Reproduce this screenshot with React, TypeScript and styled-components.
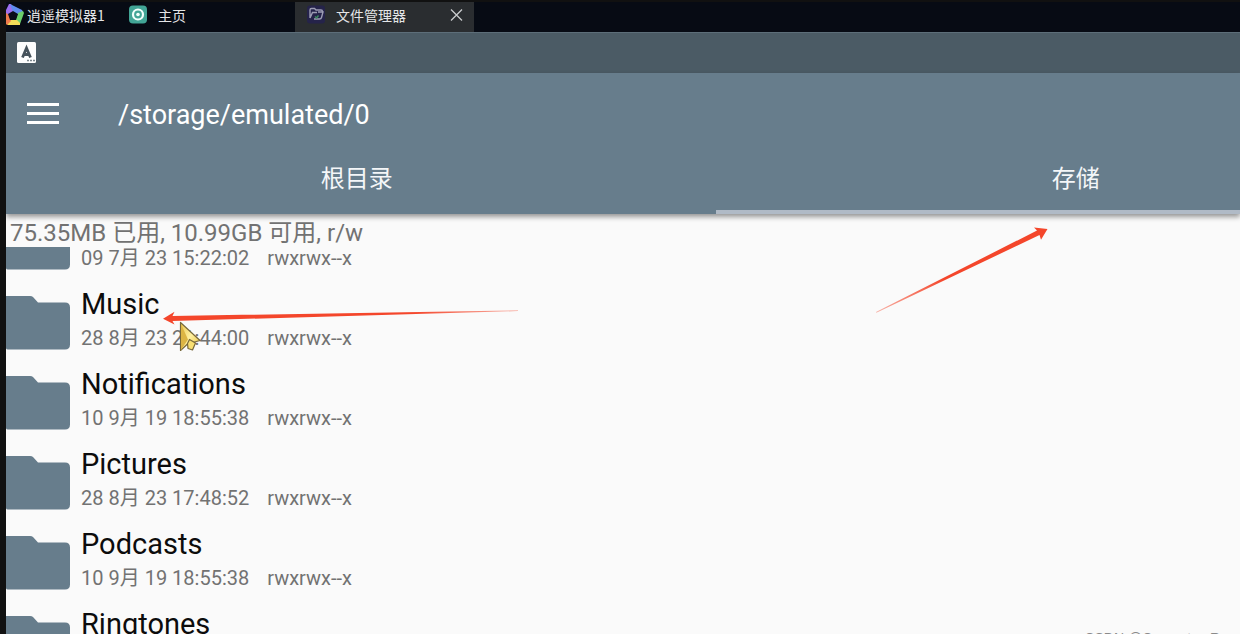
import React from "react";
import styled, { createGlobalStyle } from "styled-components";

const slate = "#677d8c";

const GlobalStyle = createGlobalStyle`
  * { box-sizing: border-box; }
  body { margin: 0; background: #fafafa; font-family: Roboto, "Noto Sans CJK SC", sans-serif; }
  button { font: inherit; color: inherit; background: none; border: 0; padding: 0; margin: 0; text-align: left; cursor: pointer; }
`;

const Screen = styled.div`
  position: relative;
  display: flex;
  flex-direction: column;
  height: 100vh;
  overflow: hidden;
  border-left: 6px solid #111111;
  background: #fafafa;
`;

const TitleBar = styled.header`
  display: flex;
  flex: none;
  height: 32px;
  border-top: 2px solid #111111;
  background: #070b14;
  color: #e4e5e7;
  font-family: "Noto Sans CJK SC", sans-serif;
  font-size: 14px;
  line-height: 26px;
  white-space: nowrap;
`;

const Brand = styled.div`
  display: flex;
  width: 122px;
  gap: 3px;
`;

const WindowTab = styled.div<{ $active?: boolean }>`
  display: flex;
  align-items: flex-start;
  width: ${(p) => (p.$active ? 179 : 167)}px;
  padding: 0 10px 0 ${(p) => (p.$active ? 11 : 0)}px;
  background: ${(p) => (p.$active ? "#2a2d30" : "transparent")};
`;

const TabIcon = styled.svg`
  flex: none;
  width: 20px;
  height: 20px;
  margin: 3px 10px 0 0;
`;

const BrandIcon = styled.svg`
  flex: none;
  width: 18px;
  height: 24px;
  margin-top: 1px;
`;

const TabLabel = styled.button`
  flex: 1;
  line-height: 26px;
`;

const CloseButton = styled.button`
  width: 14px;
  height: 26px;
  svg { display: block; }
`;

const StatusBar = styled.div`
  display: flex;
  align-items: center;
  flex: none;
  height: 41px;
  padding-left: 11px;
  background: #4b5b65;
  border-top: 1px solid #5d6e79;
`;

const AppBar = styled.div`
  position: relative;
  flex: none;
  background: ${slate};
  color: #ffffff;
  box-shadow: 0 3px 5px rgba(0, 0, 0, 0.4);
  z-index: 1;
`;

const Toolbar = styled.div`
  display: flex;
  align-items: flex-start;
  height: 81px;
  padding: 24px 0 0 21px;
  gap: 59px;
`;

const MenuButton = styled.button`
  display: flex;
  flex-direction: column;
  gap: 6px;
  width: 32px;
  padding-top: 6px;
`;

const MenuBar = styled.span`
  height: 3px;
  background: #ffffff;
`;

const Path = styled.h1`
  margin: 0;
  font-size: 27px;
  line-height: 36px;
  font-weight: 400;
`;

const Tabs = styled.div`
  display: flex;
  height: 60px;
  overflow: hidden;
`;

const Tab = styled.button<{ $active?: boolean }>`
  flex: none;
  width: ${(p) => (p.$active ? "58.4%" : "57.5%")};
  padding-right: ${(p) => (p.$active ? 0 : 8)}px;
  padding-bottom: ${(p) => (p.$active ? 6 : 10)}px;
  border-bottom: ${(p) => (p.$active ? 4 : 0)}px solid #b0bac6;
  color: #f4f6f8;
  font-size: 24px;
  line-height: 48px;
  text-align: center;
`;

const Summary = styled.p`
  flex: none;
  height: 33px;
  margin: 0;
  padding: 4px 0 0 4px;
  color: #727272;
  font-size: 24px;
  line-height: 30px;
`;

const FileList = styled.ul`
  flex: 1;
  min-height: 0;
  margin: 0;
  padding: 0;
  overflow: hidden;
  list-style: none;
`;

const Row = styled.li<{ $clipped?: boolean }>`
  height: ${(p) => (p.$clipped ? 35 : 80)}px;
  overflow: hidden;
`;

const RowButton = styled.button`
  display: flex;
  align-items: flex-end;
  gap: 11px;
  width: 100%;
  height: 100%;
`;

const FolderIcon = styled.svg`
  flex: none;
  width: 64px;
  height: 56px;
  margin-bottom: 11px;
`;

const Details = styled.span`
  display: flex;
  flex-direction: column;
`;

const Name = styled.span`
  height: 44px;
  padding-top: 4px;
  color: #0c0c0c;
  font-size: 29px;
  line-height: 36px;
`;

const Meta = styled.span`
  display: flex;
  gap: 18px;
  height: 36px;
  color: #727272;
  font-size: 20px;
  line-height: 24px;
`;

const Overlay = styled.svg`
  position: absolute;
  top: 0;
  left: -6px;
  width: 1240px;
  height: 634px;
  z-index: 2;
  pointer-events: none;
`;

const Watermark = styled.span`
  position: absolute;
  right: 20px;
  bottom: -13px;
  color: #8a8a8a;
  font-family: "Liberation Sans", sans-serif;
  font-size: 14px;
  line-height: 18px;
`;

const files = [
  { name: "", date: "09 7月 23 15:22:02", mode: "rwxrwx--x", clipped: true },
  { name: "Music", date: "28 8月 23 21:44:00", mode: "rwxrwx--x" },
  { name: "Notifications", date: "10 9月 19 18:55:38", mode: "rwxrwx--x" },
  { name: "Pictures", date: "28 8月 23 17:48:52", mode: "rwxrwx--x" },
  { name: "Podcasts", date: "10 9月 19 18:55:38", mode: "rwxrwx--x" },
  { name: "Ringtones", date: "", mode: "" },
];

function BrandLogo() {
  return (
    <BrandIcon viewBox="0 0 18 24" aria-hidden="true">
      <path d="M0 7L3 1H5L9 9L3 13L0 12Z" fill="#9c6ff0" />
      <path d="M4 1L16 7L17 9L13 12L7 9Z" fill="#5f8df0" />
      <path d="M17 8L18 10L14 21L9 18L12 10Z" fill="#6bcf6c" />
      <path d="M14 22H1L4 17H11L14 20Z" fill="#f4dd58" />
      <path d="M0 10L3 12L5 18L1 22L0 21Z" fill="#ef7b4c" />
      <path d="M2 11L7 8L12 11L10 17H4Z" fill="#0a0d1c" />
    </BrandIcon>
  );
}

function HomeIcon() {
  return (
    <TabIcon viewBox="0 0 20 20" aria-hidden="true">
      <rect x="1" y="0.500" width="18" height="18" rx="4" fill="#42a596" />
      <circle cx="10" cy="9.500" r="5" fill="none" stroke="#f2fffc" strokeWidth="2.200" />
      <circle cx="10" cy="9.500" r="1.800" fill="#f2fffc" />
    </TabIcon>
  );
}

function ManagerIcon() {
  return (
    <TabIcon viewBox="0 0 20 20" aria-hidden="true">
      <rect x="1" y="0.500" width="18" height="18" rx="3" fill="#25234a" />
      <path d="M4 13V5q0-1.500 1.500-1.500h3l1.500 1.500h5q1.500 0 1.500 1.500M4 13l2.500-5.500h4.500M12 7h5l-1.500 5.500q-.4 1.500-2 1.500H8" fill="none" stroke="#9c9cb4" strokeWidth="1.400" />
      <path d="M9 11.500l1.500 1.500 2-2.500" fill="none" stroke="#3d8d5f" strokeWidth="1.400" />
    </TabIcon>
  );
}

function Folder() {
  return (
    <FolderIcon viewBox="0 0 64 56" aria-hidden="true">
      <path d="M0 1H24Q26 1 27 2L32 7.500H59Q64 7.500 64 12.500V49.500Q64 54.500 59 54.500H3Q0 54.500 0 53Z" fill={slate} />
    </FolderIcon>
  );
}

function Annotations() {
  return (
    <Overlay viewBox="0 0 1240 634" aria-hidden="true">
      <defs>
        <linearGradient id="fadeLeft" gradientUnits="userSpaceOnUse" x1="163" y1="0" x2="518" y2="0">
          <stop offset="0.700" stopColor="#f4462b" />
          <stop offset="1" stopColor="#f4462b" stopOpacity="0.400" />
        </linearGradient>
        <linearGradient id="fadeRight" gradientUnits="userSpaceOnUse" x1="1047" y1="229" x2="876" y2="312">
          <stop offset="0.600" stopColor="#f4462b" />
          <stop offset="1" stopColor="#f4462b" stopOpacity="0.400" />
        </linearGradient>
        <linearGradient id="gold" x1="0" y1="0" x2="1" y2="1">
          <stop offset="0" stopColor="#e8c54e" />
          <stop offset="0.500" stopColor="#fff0a0" />
          <stop offset="1" stopColor="#e9bd36" />
        </linearGradient>
      </defs>
      <path d="M180.500 322.500V350.500L187.500 344L200 340.500Z" fill="url(#gold)" stroke="#77683a" strokeWidth="1.200" strokeLinejoin="round" />
      <path d="M181 324L188 339.500L181 350Z" fill="#dcb544" />
      <path d="M187.500 343.500L189.500 339.500L195.500 343L192.500 350L188 348.500Z" fill="#f8df72" stroke="#77683a" strokeWidth="1.200" strokeLinejoin="round" />
      <path d="M163 318.700L174.500 311.800L172.500 316L518 310.300V311.100L172.500 321L174.500 324.500Z" fill="url(#fadeLeft)" />
      <path d="M1047.500 229L1034 227.500L1037 230.500L876 312L876.400 312.800L1039.500 235L1041 239.800Z" fill="url(#fadeRight)" />
    </Overlay>
  );
}

export default function App() {
  return (
    <>
      <GlobalStyle />
      <Screen>
        <TitleBar>
          <Brand>
            <BrandLogo />
            <span>逍遥模拟器1</span>
          </Brand>
          <WindowTab>
            <HomeIcon />
            <TabLabel type="button">主页</TabLabel>
          </WindowTab>
          <WindowTab $active>
            <ManagerIcon />
            <TabLabel type="button">文件管理器</TabLabel>
            <CloseButton type="button" aria-label="关闭">
              <svg width="14" height="14" viewBox="0 0 14 14" aria-hidden="true">
                <path d="M1 1.500L12 12.500M12 1.500L1 12.500" stroke="#c9cbcd" strokeWidth="1.300" />
              </svg>
            </CloseButton>
          </WindowTab>
        </TitleBar>
        <StatusBar>
          <svg width="20" height="22" viewBox="0 0 20 22" aria-hidden="true">
            <rect x="0" y="0" width="19" height="21" rx="1.500" fill="#fdfdfd" />
            <path d="M5.500 15.500L9.500 6L13.500 15.500M7 12.500H12" fill="none" stroke="#46525b" strokeWidth="2.800" />
            <path d="M10 18.500H18" stroke="#7b868d" strokeWidth="1.500" strokeDasharray="2 1" />
          </svg>
        </StatusBar>
        <AppBar>
          <Toolbar>
            <MenuButton type="button" aria-label="菜单">
              <MenuBar />
              <MenuBar />
              <MenuBar />
            </MenuButton>
            <Path>/storage/emulated/0</Path>
          </Toolbar>
          <Tabs role="tablist">
            <Tab type="button" role="tab" aria-selected="false">根目录</Tab>
            <Tab type="button" role="tab" aria-selected="true" $active>存储</Tab>
          </Tabs>
        </AppBar>
        <Summary>75.35MB 已用, 10.99GB 可用, r/w</Summary>
        <FileList>
          {files.map((file, i) => (
            <Row key={i} $clipped={file.clipped}>
              <RowButton type="button">
                <Folder />
                <Details>
                  {file.name && <Name>{file.name}</Name>}
                  <Meta>
                    <span>{file.date}</span>
                    <span>{file.mode}</span>
                  </Meta>
                </Details>
              </RowButton>
            </Row>
          ))}
        </FileList>
        <Annotations />
        <Watermark>CSDN @Convert usR</Watermark>
      </Screen>
    </>
  );
}
